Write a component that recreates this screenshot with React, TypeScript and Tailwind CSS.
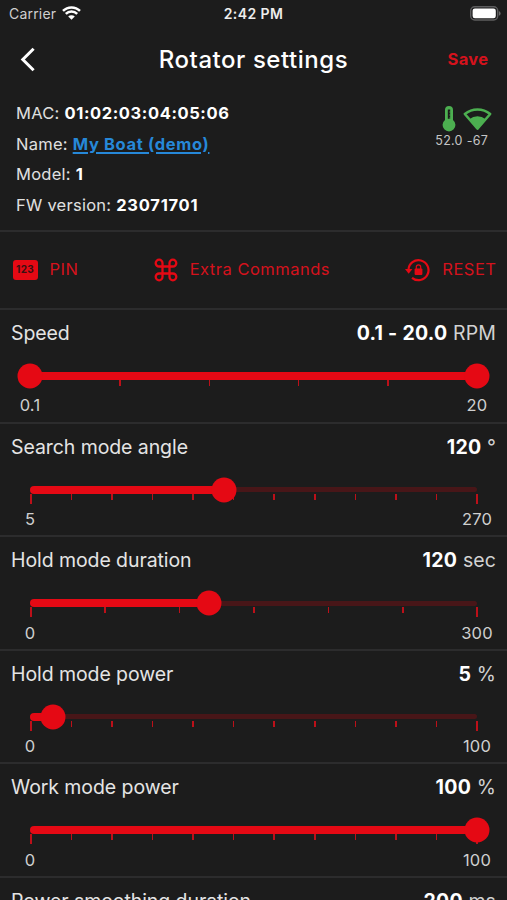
import React from 'react';

type SliderSetting = {
  title: string;
  value: string;
  unit: string;
  min: string;
  max: string;
  to: number;
  steps: number;
  range?: boolean;
};

const settings: SliderSetting[] = [
  { title: 'Speed', value: '0.1 - 20.0', unit: 'RPM', min: '0.1', max: '20', to: 100, steps: 5, range: true },
  { title: 'Search mode angle', value: '120', unit: '°', min: '5', max: '270', to: 43.4, steps: 11 },
  { title: 'Hold mode duration', value: '120', unit: 'sec', min: '0', max: '300', to: 40, steps: 6 },
  { title: 'Hold mode power', value: '5', unit: '%', min: '0', max: '100', to: 5, steps: 11 },
  { title: 'Work mode power', value: '100', unit: '%', min: '0', max: '100', to: 100, steps: 11 },
  { title: 'Power smoothing duration', value: '200', unit: 'ms', min: '0', max: '1000', to: 20, steps: 10 },
];

function Thumb({ at }: { at: number }) {
  return (
    <span
      className="absolute top-1/2 size-[25px] -translate-x-1/2 -translate-y-1/2 rounded-full bg-[#e50914]"
      style={{ left: `${at}%` }}
    />
  );
}

function Slider({ s }: { s: SliderSetting }) {
  return (
    <div className="mx-[30px] mt-[25px]">
      <div className="relative flex h-2 items-center">
        <div className="h-[5px] w-full rounded-full bg-[#481618]" />
        <div className="absolute left-0 h-2 rounded-full bg-[#e50914]" style={{ width: `${s.to}%` }} />
        {s.range && <Thumb at={0} />}
        <Thumb at={s.to + 0.1} />
      </div>
      <div className="-mr-px flex h-[10px] justify-between">
        {Array.from({ length: s.steps + 1 }, (_, i) => {
          const end = i === 0 || i === s.steps;
          return <span key={i} className={`w-[1.5px] bg-[#bd1019] ${end ? (s.range ? 'h-0' : 'h-[10px]') : 'h-[6px]'}`} />;
        })}
      </div>
    </div>
  );
}

function Setting({ s }: { s: SliderSetting }) {
  return (
    <section className="h-[113.6px] shrink-0 border-t-2 border-[#2c2c2d]">
      <div className="flex justify-between px-[11px] pt-[9px] text-[19.5px] leading-7 tracking-[-0.08px] text-[#e4e4e4]">
        <span>{s.title}</span>
        <span className="tracking-[0.1px] text-[#d2d2d2]">
          <b className="font-bold tracking-[0.28px] text-white">{s.value}</b> {s.unit}
        </span>
      </div>
      <Slider s={s} />
      <div className="flex justify-between pt-[5.4px] text-[16.5px] leading-5 tracking-[0.2px] text-[#cfcfcf]">
        <span className="w-[60px] text-center">{s.min}</span>
        <span className="w-[60px] text-center">{s.max}</span>
      </div>
    </section>
  );
}

function InfoRow({ label, children }: { label: string; children: React.ReactNode }) {
  return (
    <div className="h-[30.5px] leading-[30px]">
      {label}: {children}
    </div>
  );
}

export default function App() {
  return (
    <div className="flex h-[900px] w-full flex-col overflow-hidden bg-[#1c1c1c] font-['Inter',sans-serif] text-white">
      <div className="grid h-7 shrink-0 grid-cols-3 items-center pr-[6px] pl-[9px] text-[14px] leading-7">
        <div className="flex items-center gap-[6px] text-[#cfcfcf]">
          <span className="tracking-[0.2px]">Carrier</span>
          <svg className="-mt-[2px]" width="19" height="14" viewBox="0 0 19 14" fill="none" stroke="#fff" strokeWidth="2.5">
            <path d="M1 4.9a12.1 12.1 0 0 1 17 0M3.8 7.8a8.1 8.1 0 0 1 11.4 0" />
            <path d="M9.5 13.8 6.2 10.5a4.7 4.7 0 0 1 6.6 0Z" fill="#fff" stroke="none" />
          </svg>
        </div>
        <div className="pr-[3px] text-center font-semibold tracking-[0.4px] whitespace-nowrap text-[#ededed]">2:42 PM</div>
        <div className="-mt-[2px] flex justify-end">
          <svg width="31" height="15" viewBox="0 0 31 15">
            <rect x="0.7" y="0.7" width="27" height="13.3" rx="4" fill="none" stroke="#5d5d5e" strokeWidth="1.4" />
            <rect x="2.6" y="2.5" width="23.2" height="9.7" rx="2.3" fill="#fff" />
            <path d="M28.9 5v4.8q1.7-.8 1.7-2.4T28.9 5Z" fill="#6b6b6b" />
          </svg>
        </div>
      </div>

      <header className="grid h-[63px] shrink-0 grid-cols-[80px_1fr_80px] items-center">
        <svg className="ml-5" width="16" height="25" viewBox="0 0 16 25" fill="none" stroke="#fff" strokeWidth="3">
          <path d="M13.6 1.8 2.8 12.5l10.8 10.7" />
        </svg>
        <h1 className="text-center text-[24px] font-medium tracking-[0.55px]">Rotator settings</h1>
        <span className="pr-[18.5px] text-right text-[16.5px] font-bold tracking-[0.35px] text-[#d5121c]">Save</span>
      </header>

      <div className="flex h-[139px] shrink-0 justify-between pt-[7px] pr-[14px] pl-4 text-[16.5px] tracking-[0.25px] text-[#e0e0e0]">
        <div>
          <InfoRow label="MAC"><b className="tracking-[0.6px] text-white">01:02:03:04:05:06</b></InfoRow>
          <InfoRow label="Name"><b className="tracking-[0.65px] text-[#2688d8] underline decoration-2 underline-offset-2">My Boat (demo)</b></InfoRow>
          <InfoRow label="Model"><b className="text-white">1</b></InfoRow>
          <InfoRow label="FW version"><b className="tracking-[0.75px] text-white">23071701</b></InfoRow>
        </div>
        <div className="flex pt-[8px] text-[12.5px] leading-4 text-[#c4c4c4]">
          <div className="flex w-[30px] flex-col items-center">
            <svg width="14" height="26" viewBox="0 0 14 26">
              <path d="M3 4a4 4 0 0 1 8 0v10a6.4 6.4 0 1 1-8 0Z" fill="#4caf50" />
              <path d="M7 3.5v9.3" stroke="#1c1c1c" strokeWidth="2.4" />
              <path d="M7.4 6h1M7.4 9h1M7.4 12h1" stroke="#4caf50" strokeWidth="1.2" />
            </svg>
            <span className="mt-px">52.0</span>
          </div>
          <div className="flex w-[29px] flex-col items-center">
            <svg className="-ml-[2px]" width="29" height="26" viewBox="0 0 29 26">
              <path d="M14.5 22.6 1.8 8a20 20 0 0 1 25.4 0Z" fill="none" stroke="#4caf50" strokeWidth="2.5" strokeLinejoin="round" />
              <path d="M14.5 23.4 6.4 13.2a12.8 12.8 0 0 1 16.2 0Z" fill="#4caf50" />
            </svg>
            <span className="mt-px -ml-[2px]">-67</span>
          </div>
        </div>
      </div>

      <div className="flex h-[78px] shrink-0 items-center justify-between border-t-2 border-[#2c2c2d] pr-[10.5px] pb-px pl-[12.5px] text-[16.5px] tracking-[0.5px] text-[#d5121c]">
        <div className="flex items-center gap-3">
          <span className="flex h-5 w-[25px] items-center justify-center rounded-[3px] bg-[#e50914] text-[10px] font-bold tracking-[0.3px] text-[#3a1012]">123</span>
          <span>PIN</span>
        </div>
        <div className="flex items-center gap-3">
          <svg width="24" height="24" viewBox="0 0 24 24" fill="none" stroke="#e50914" strokeWidth="2.3">
            <path d="M8.5 8.5H5.2A3.4 3.4 0 1 1 8.5 5.2v13.6a3.4 3.4 0 1 1-3.3-3.3h13.6a3.4 3.4 0 1 1-3.3 3.3V5.2a3.4 3.4 0 1 1 3.3 3.3Z" />
          </svg>
          <span>Extra Commands</span>
        </div>
        <div className="flex items-center gap-3">
          <svg width="25" height="24" viewBox="0 0 25 24" fill="none" stroke="#e50914" strokeWidth="2.2">
            <path d="M3.5 12A10 10 0 1 1 7 19.8" />
            <path d="M0 11h7.4l-3.7 4.8Z" fill="#e50914" stroke="none" />
            <rect x="9.6" y="10.6" width="7.8" height="6.4" rx="1" fill="#e50914" stroke="none" />
            <path d="M11.3 11V9a2.2 2.2 0 0 1 4.4 0V11" strokeWidth="1.2" />
          </svg>
          <span>RESET</span>
        </div>
      </div>

      {settings.map((s) => (
        <Setting key={s.title} s={s} />
      ))}
    </div>
  );
}
